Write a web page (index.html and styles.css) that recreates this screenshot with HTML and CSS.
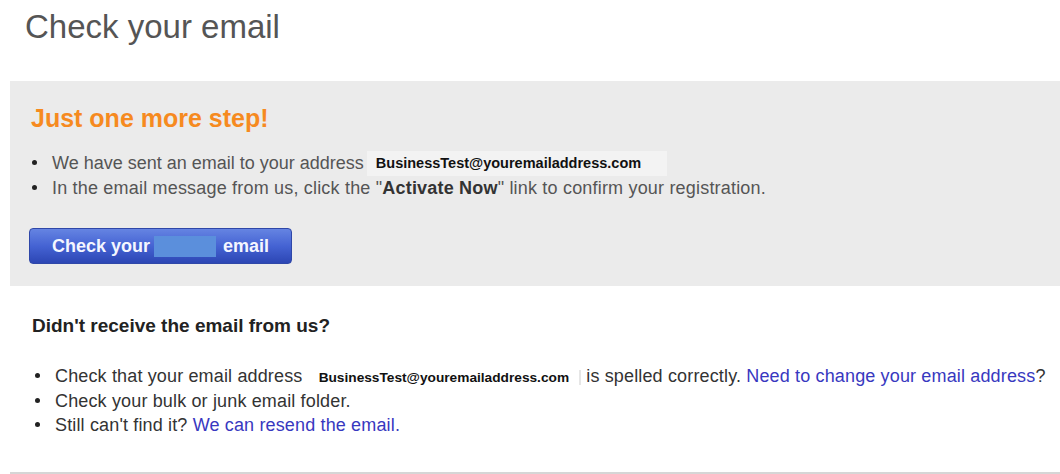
FILE: index.html
```html
<!DOCTYPE html>
<html lang="en">
<head>
<meta charset="utf-8">
<title>Check your email</title>
<link rel="stylesheet" href="styles.css">
</head>
<body>
<h1 class="title">Check your email</h1>

<section class="step-box">
  <h2 class="step-title">Just one more step!</h2>
  <ul class="step-list">
    <li>We have sent an email to your address <span class="email-hl">BusinessTest@youremailaddress.com</span></li>
    <li class="step-wide">In the email message from us, click the "<b>Activate Now</b>" link to confirm your registration.</li>
  </ul>
  <a class="btn" href="#">Check your<span class="btn-mask"></span>email</a>
</section>

<section class="help">
  <h3 class="help-title">Didn't receive the email from us?</h3>
  <ul class="help-list">
    <li>Check that your email address <span class="email-plain">BusinessTest@youremailaddress.com</span> is spelled correctly. <a class="link" href="#">Need to change your email address</a>?</li>
    <li>Check your bulk or junk email folder.</li>
    <li>Still can't find it? <a class="link" href="#">We can resend the email.</a></li>
  </ul>
</section>

<div class="rule"></div>
</body>
</html>
```

FILE: styles.css
```css
html, body {
  margin: 0;
  padding: 0;
  background: #ffffff;
}

body {
  width: 1060px;
  font-family: "Liberation Sans", Arial, sans-serif;
  color: #333;
}

.title {
  margin: 0;
  padding: 8px 0 0 25px;
  font-size: 33px;
  line-height: 38px;
  font-weight: normal;
  color: #555555;
}

.step-box {
  margin: 35px 0 0 10px;
  padding: 22px 0 22px 21px;
  background: #ebebeb;
}

.step-title {
  margin: 0;
  font-size: 25px;
  line-height: 30px;
  font-weight: bold;
  color: #f68a1f;
}

.step-list,
.help-list {
  list-style: none;
  margin: 0;
  padding: 0;
}

.step-list {
  margin-top: 18px;
  font-size: 18px;
  line-height: 25px;
  color: #555555;
}

.step-wide {
  letter-spacing: 0.19px;
}

.step-list b {
  color: #333;
}

.step-list li::before,
.help-list li::before {
  content: "";
  display: inline-block;
  width: 5px;
  height: 5px;
  border-radius: 50%;
  background: #222;
  vertical-align: 0.2em;
  margin-right: 15px;
}

.step-list li::before {
  margin-left: 1px;
}

.help-list li::before {
  margin-left: 3px;
}

.email-hl {
  display: inline-block;
  vertical-align: top;
  height: 25px;
  line-height: 24px;
  padding: 0 26px 0 9px;
  margin-left: -2px;
  background: #f3f3f3;
  font-size: 14.5px;
  font-weight: bold;
  color: #111;
}

.btn {
  display: inline-flex;
  align-items: center;
  margin: 27px 0 0 -2px;
  height: 34px;
  padding: 0 22px;
  border: 1px solid #2f47a8;
  border-radius: 4px;
  background: linear-gradient(#6584e2, #4563d3 50%, #2c46b4);
  color: #f4f6ff;
  font-size: 18px;
  font-weight: bold;
  text-decoration: none;
}

.btn-mask {
  display: inline-block;
  width: 62px;
  height: 21px;
  margin: 0 7px 0 4px;
  background: #5b8fdc;
}

.help {
  margin: 29px 0 0 32px;
}

.help-title {
  margin: 0;
  font-size: 19px;
  line-height: 22px;
  font-weight: bold;
  color: #222;
}

.help-list {
  margin-top: 27px;
  font-size: 18px;
  line-height: 24.5px;
  letter-spacing: 0.15px;
  color: #333;
}

.email-plain {
  display: inline-block;
  line-height: 15px;
  padding: 0 10px 0 11px;
  border-right: 2px solid #e6e6e6;
  font-size: 13.7px;
  font-weight: bold;
  letter-spacing: 0;
  color: #111;
}

.link {
  color: #3838c0;
  text-decoration: none;
}

.rule {
  margin: 34px 0 0 10px;
  height: 2px;
  background: #d6d6d6;
}
```
